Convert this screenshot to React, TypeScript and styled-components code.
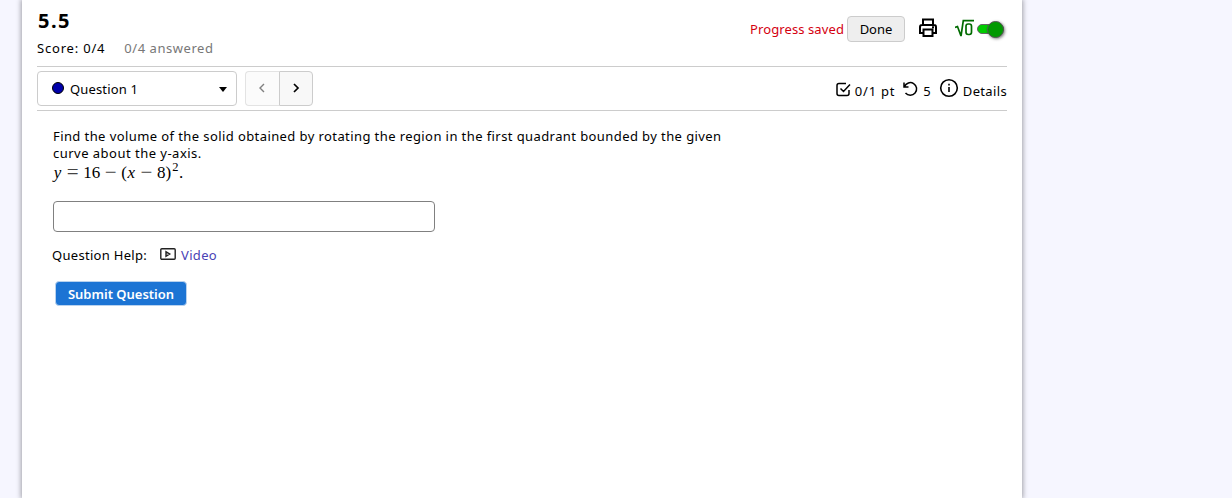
import React from 'react'
import styled, { createGlobalStyle } from 'styled-components'

const GlobalStyle = createGlobalStyle`
    * {
        box-sizing: border-box;
    }

    body {
        margin: 0;
        background: #f6f6ff;
        color: #000;
        font-family: 'Noto Sans', 'Open Sans', sans-serif;
        font-size: 13px;
        line-height: 17px;
        overflow: hidden;
    }

    button {
        font: inherit;
        letter-spacing: inherit;
    }
`

const Page = styled.main`
    width: 1000px;
    height: 498px;
    margin-left: 22px;
    padding: 0 15px;
    background: #fff;
    box-shadow: 0 0 5px 1px rgba(0, 0, 0, 0.35);
`

interface ITextProps {
    $track?: number
    $color?: string
}

const Text = styled.span<ITextProps>`
    color: ${({ $color }) => $color || 'inherit'};
    letter-spacing: ${({ $track }) => $track || 0}px;
    white-space: nowrap;
`

const Header = styled.header`
    display: flex;
    justify-content: space-between;
    height: 67px;
    border-bottom: 1px solid #ccc;
`

const Title = styled.h1`
    margin: 8px 0 0 1px;
    font-size: 20px;
    line-height: 25px;
    font-weight: 700;
    letter-spacing: 1.5px;
`

const Scores = styled.div`
    display: flex;
    gap: 19px;
    margin-top: 7px;
`

const HeaderTools = styled.div`
    display: flex;
    align-items: center;
    height: 26px;
    margin-top: 16px;
    padding-right: 3px;
`

const DoneButton = styled.button`
    width: 58px;
    height: 26px;
    margin: -1px 13px 0 3px;
    padding: 1px 0 0;
    border: 1px solid #ccc;
    border-radius: 4px;
    background: #eee;
    color: #000;
`

const Toggle = styled.span`
    display: flex;
    align-items: center;
    justify-content: flex-end;
    width: 27px;
    height: 10px;
    margin-left: 3px;
    border: 1px solid #666;
    border-radius: 5px;
    background: #0c0;
`

const Knob = styled.span`
    width: 17px;
    height: 17px;
    margin-right: -1px;
    flex: none;
    border: 1px solid #555;
    border-radius: 50%;
    background: #090;
    box-shadow: 1px 1px 3px rgba(0, 0, 0, 0.5);
`

const Toolbar = styled.div`
    display: flex;
    align-items: center;
    height: 44px;
    border-bottom: 1px solid #ccc;
`

const QuestionSelect = styled.button`
    display: flex;
    align-items: center;
    width: 200px;
    height: 35px;
    padding: 2px 9px 0 14px;
    border: 1px solid #ccc;
    border-radius: 4px;
    background: #fff;
    color: #000;
    text-align: left;
`

const Dot = styled.span`
    width: 12px;
    height: 12px;
    margin: -4px 6px 0 0;
    border: 1px solid #000;
    border-radius: 50%;
    background: #00a;
`

const Caret = styled.span`
    margin-left: auto;
    border: 4px solid transparent;
    border-top: 5px solid #000;
    border-bottom: 0;
`

const Pager = styled.div`
    display: flex;
    margin-left: 8px;
`

const PagerButton = styled.button<{ $side: 'left' | 'right' }>`
    display: flex;
    align-items: center;
    justify-content: center;
    width: 34px;
    height: 35px;
    padding: 0 1px 1px 0;
    border: 1px solid ${({ $side }) => ($side === 'left' ? '#e3e3e3' : '#ccc')};
    border-right-width: ${({ $side }) => ($side === 'left' ? 0 : 1)}px;
    border-radius: ${({ $side }) => ($side === 'left' ? '4px 0 0 4px' : '0 4px 4px 0')};
    background: ${({ $side }) => ($side === 'left' ? '#fbfbfb' : '#f8f8f8')};
    color: ${({ $side }) => ($side === 'left' ? '#808080' : '#000')};
`

const Details = styled.div`
    display: flex;
    align-items: center;
    margin-left: auto;
    padding-top: 5px;
`

const Icon = styled.svg<{ $before?: number; $gap?: number; $lift?: number; $weight?: number }>`
    flex: none;
    fill: none;
    stroke: currentColor;
    stroke-width: ${({ $weight }) => $weight || 2};
    margin-left: ${({ $before }) => $before || 0}px;
    margin-right: ${({ $gap }) => $gap || 0}px;
    margin-top: ${({ $lift }) => -($lift || 0)}px;
`

const Content = styled.section`
    padding: 17px 16px 0;
`

const Prompt = styled.p`
    margin: 0;
`

const Formula = styled.div`
    height: 20px;
    font-family: 'Liberation Serif', serif;
    font-size: 17px;
    line-height: 21px;
    white-space: nowrap;
`

const Variable = styled.i`
    margin: 0 0.8px;
`

const Operator = styled.span`
    display: inline-block;
    width: 13px;
    margin: 0 4px;
    text-align: center;
    font-size: 21px;
    line-height: 0;
    vertical-align: -1px;
    color: #444;
`

const Power = styled.sup`
    display: inline-block;
    font-size: 12.5px;
    line-height: 0;
    vertical-align: 7px;
    margin: 0 0.5px 0 1px;
`

const Answer = styled.input`
    display: block;
    width: 382px;
    height: 31px;
    margin-top: 19px;
    padding: 4px 8px;
    border: 1px solid #808080;
    border-radius: 4px;
    background: #fff;
    font: inherit;
`

const Help = styled.div`
    display: flex;
    align-items: center;
    height: 17px;
    margin: 15px 0 0 -1px;
`

const VideoLink = styled.a`
    display: flex;
    align-items: center;
    margin-left: 13px;
`

const SubmitButton = styled.button`
    display: block;
    width: 132px;
    height: 25px;
    margin: 17px 0 0 2px;
    padding: 2px 0 0;
    border: 1px solid #b9d2ee;
    border-radius: 4px;
    background: #1c74d4;
    color: #fff;
    font-weight: 600;
`

function App() {
    return (
        <>
            <GlobalStyle />
            <Page>
                <Header>
                    <div>
                        <Title>5.5</Title>
                        <Scores>
                            <Text $track={0.8}>Score: 0/4</Text>
                            <Text $track={0.55} $color="#777">0/4 answered</Text>
                        </Scores>
                    </div>
                    <HeaderTools>
                        <Text $track={0.1} $color="#d4000f">Progress saved</Text>
                        <DoneButton>Done</DoneButton>
                        <Icon width="20" height="20" viewBox="0 0 20 20" $gap={17} $lift={3}>
                            <path d="M5 7V1.5h10V7M5 15H2V9q0-2 2-2h12q2 0 2 2v6h-3M5.5 11.5h9V18h-9zM14 9.3h2" />
                        </Icon>
                        <Icon width="19" height="20" viewBox="0 0 19 20" color="#006b00" $weight={1.7}>
                            <path d="M0 8.5l2.5-1L6 17 8.3 1.7H19" />
                            <rect x="11" y="5" width="5.5" height="10.5" rx="2.2" />
                        </Icon>
                        <Toggle>
                            <Knob />
                        </Toggle>
                    </HeaderTools>
                </Header>
                <Toolbar>
                    <QuestionSelect>
                        <Dot />
                        <Text $track={0.15}>Question 1</Text>
                        <Caret />
                    </QuestionSelect>
                    <Pager>
                        <PagerButton $side="left" aria-label="Previous question">
                            <Icon width="8" height="10" viewBox="0 0 8 10" $weight={1.4}>
                                <path d="M6 1L2 5l4 4" />
                            </Icon>
                        </PagerButton>
                        <PagerButton $side="right" aria-label="Next question">
                            <Icon width="8" height="10" viewBox="0 0 8 10" $weight={1.7}>
                                <path d="M2 1l4 4-4 4" />
                            </Icon>
                        </PagerButton>
                    </Pager>
                    <Details>
                        <Icon width="15" height="15" viewBox="0 0 15 15" $gap={4} $lift={3} $weight={1.5}>
                            <path d="M10 1.5H3q-2 0-2 2v8q0 2 2 2h8q2 0 2-2V8M4.5 6.5l3 3 6.5-7" />
                        </Icon>
                        <Text $track={0.8}>0/1 pt</Text>
                        <Icon width="16" height="16" viewBox="0 0 16 16" $before={8} $gap={4} $lift={4} $weight={1.5}>
                            <path d="M1 1.5V6h4.5M1.5 5.5a6.3 6.3 0 1 1 1 6.5" />
                        </Icon>
                        <Text>5</Text>
                        <Icon width="20" height="20" viewBox="0 0 20 20" $before={8} $gap={4} $lift={7} $weight={1.6}>
                            <circle cx="10" cy="10" r="8.3" />
                            <path d="M10 9v5M10 5.7v1.8" />
                        </Icon>
                        <Text $track={0.35}>Details</Text>
                    </Details>
                </Toolbar>
                <Content>
                    <Prompt>
                        <Text $track={0.41}>Find the volume of the solid obtained by rotating the region in the first quadrant bounded by the given</Text>
                        <br />
                        <Text $track={0.48}>curve about the y-axis.</Text>
                    </Prompt>
                    <Formula>
                        <Variable>y</Variable>
                        <Operator>=</Operator>
                        <span>16</span>
                        <Operator>−</Operator>
                        <span>(</span>
                        <Variable>x</Variable>
                        <Operator>−</Operator>
                        <span>8)</span>
                        <Power>2</Power>
                        <span>.</span>
                    </Formula>
                    <Answer aria-label="Answer" />
                    <Help>
                        <Text $track={0.3}>Question Help:</Text>
                        <VideoLink>
                            <Icon width="16" height="12" viewBox="0 0 16 12" $gap={5} $lift={3} $weight={1.4} color="#222">
                                <rect x=".8" y=".8" width="14.4" height="10.4" rx="1" />
                                <path d="M6 3.8v4.4L9.7 6z" />
                            </Icon>
                            <Text $track={0.3} $color="#4a42b5">Video</Text>
                        </VideoLink>
                    </Help>
                    <SubmitButton>Submit Question</SubmitButton>
                </Content>
            </Page>
        </>
    )
}

export default App
